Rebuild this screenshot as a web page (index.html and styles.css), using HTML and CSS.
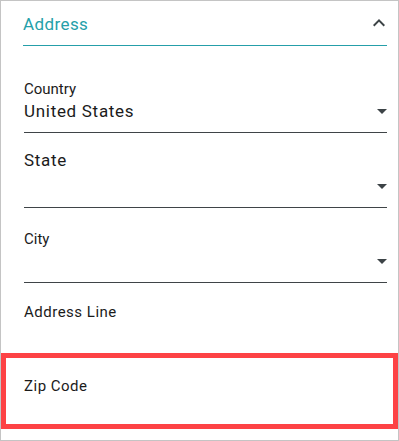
FILE: index.html
```html
<!DOCTYPE html>
<html lang="en">

<head>
    <meta charset="UTF-8">
    <meta name="viewport" content="width=device-width, initial-scale=1.0">
    <title>Address</title>
    <link rel="stylesheet" href="styles.css">
</head>

<body>
    <div class="panel">
        <div class="panel-head">
            <span class="panel-title">Address</span>
            <svg class="chevron" width="24" height="24" viewBox="0 0 24 24">
                <path d="M12 8l-6 6 1.41 1.41L12 10.83l4.59 4.58L18 14z" fill="#3c4346" />
            </svg>
        </div>

        <!-- 下拉类型的字段 -->
        <div class="field field-first">
            <div class="label">Country</div>
            <div class="value">
                <span>United States</span>
                <svg class="caret" width="10" height="5" viewBox="7 10 10 5">
                    <path d="M7 10l5 5 5-5z" fill="#3c4346" />
                </svg>
            </div>
        </div>
        <div class="field">
            <div class="label label-lg">State</div>
            <div class="value">
                <span></span>
                <svg class="caret" width="10" height="5" viewBox="7 10 10 5">
                    <path d="M7 10l5 5 5-5z" fill="#3c4346" />
                </svg>
            </div>
        </div>
        <div class="field">
            <div class="label">City</div>
            <div class="value">
                <span></span>
                <svg class="caret" width="10" height="5" viewBox="7 10 10 5">
                    <path d="M7 10l5 5 5-5z" fill="#3c4346" />
                </svg>
            </div>
        </div>

        <!-- 文本类型的字段 -->
        <div class="text-field">
            <div class="label label-text">Address Line</div>
        </div>
        <div class="text-field highlight">
            <div class="label label-text">Zip Code</div>
        </div>
    </div>
</body>

</html>
```

FILE: styles.css
```css
* {
    margin: 0;
    padding: 0;
    box-sizing: border-box;
}

body {
    font-family: Roboto, "Liberation Sans", Arial, sans-serif;
    color: #1b1b1b;
    background: #fff;
}

.panel {
    width: 399px;
    height: 441px;
    border: 1px solid #c4c4c4;
    padding: 0 11px 0 22px;
    overflow: hidden;
}

.panel-head {
    display: flex;
    justify-content: space-between;
    align-items: flex-start;
    padding: 13px 0 10px;
    border-bottom: 1px solid #259fa9;
}

.panel-title {
    font-size: 17px;
    line-height: 20px;
    letter-spacing: 0.4px;
    color: #259fa9;
}

.chevron {
    margin-top: -3px;
    margin-right: -4px;
}

.field {
    margin-left: 1px;
    padding: 23px 0 10px;
    border-bottom: 1px solid #3f4447;
}

.field-first {
    margin-top: 12px;
}

.label {
    font-size: 15px;
    line-height: 16px;
    margin-bottom: 4px;
}

.label-lg {
    font-size: 17px;
    letter-spacing: 0.7px;
    margin-top: -4px;
    margin-bottom: 8px;
}

.label-text {
    letter-spacing: 0.5px;
}

.value {
    display: flex;
    justify-content: space-between;
    align-items: center;
    height: 21px;
    font-size: 17px;
    line-height: 21px;
    letter-spacing: 0.7px;
}

.text-field {
    height: 70px;
    margin-left: 1px;
    padding-top: 21px;
}

.highlight {
    height: 76px;
    margin: 0 -11px 0 -22px;
    padding: 20px 0 0 18px;
    border: 5px solid #fd4245;
}
```
